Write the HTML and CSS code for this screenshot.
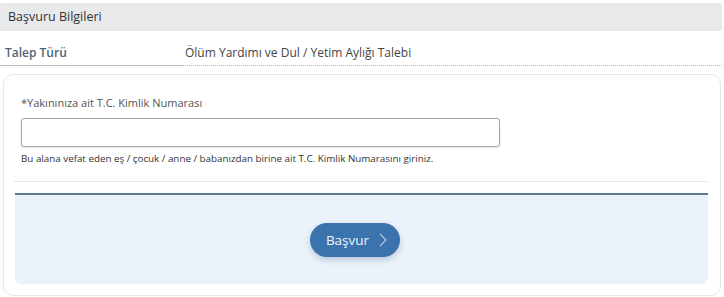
FILE: index.html
```html
<!DOCTYPE html>
<html lang="tr">
  <head>
    <meta charset="UTF-8" />
    <meta name="viewport" content="width=device-width, initial-scale=1.0" />
    <title>Başvuru Bilgileri</title>
    <link rel="stylesheet" href="styles.css">
  </head>
  <body>
    <div class="page">
      <div class="sectionTitle">Başvuru Bilgileri</div>

      <div class="infoRow">
        <div class="infoLabel">Talep Türü</div>
        <div class="infoValue">Ölüm Yardımı ve Dul / Yetim Aylığı Talebi</div>
      </div>

      <div class="card">
        <div class="formBody">
          <label class="fieldLabel" for="tckn">*Yakınınıza ait T.C. Kimlik Numarası</label>
          <input class="fieldInput" id="tckn" type="text" />
          <p class="fieldHelp">Bu alana vefat eden eş / çocuk / anne / babanızdan birine ait T.C. Kimlik Numarasını giriniz.</p>
        </div>
        <div class="formFooter">
          <button class="submitBtn">Başvur
            <svg class="chev" width="8" height="14" viewBox="0 0 8 14"><path d="M1 1 L7 7 L1 13" fill="none" stroke="#b9cfe6" stroke-width="1.1"/></svg>
          </button>
        </div>
      </div>
    </div>
  </body>
</html>
```

FILE: styles.css
```css
* {
  margin: 0;
  padding: 0;
  box-sizing: border-box;
}
body {
  width: 724px;
  height: 297px;
  background-color: #fff;
  font-family: "Open Sans", "Noto Sans", sans-serif;
  color: #444;
  overflow: hidden;
}
.page {
  padding-top: 3px;
}
.sectionTitle {
  height: 28px;
  margin-right: 2px;
  background-color: #e8e9eb;
  border-radius: 2px;
  padding-left: 8px;
  font-size: 12.5px;
  line-height: 28px;
  color: #333;
}
.infoRow {
  display: flex;
  margin-top: 12px;
  height: 23px;
  margin-right: 2px;
}
.infoLabel {
  width: 183px;
  padding-left: 5px;
  font-size: 12px;
  font-weight: 600;
  color: #4d6478;
  border-bottom: 1px solid #b9bec4;
  line-height: 20px;
}
.infoValue {
  flex: 1;
  padding-left: 2px;
  font-size: 12px;
  color: #444;
  border-bottom: 1px dotted #b5b5b5;
  line-height: 20px;
}
.card {
  margin: 8px 3px 0 3px;
  height: 222px;
  border: 1px solid #e6e6e6;
  border-radius: 10px;
  padding: 0 12px 10px 11px;
}
.formBody {
  padding: 21px 0 0 6px;
  height: 107px;
  border-bottom: 1px dotted #d0d0d0;
}
.fieldLabel {
  display: block;
  font-size: 11px;
  color: #555;
  line-height: 14px;
}
.fieldInput {
  display: block;
  margin-top: 8px;
  width: 479px;
  height: 29px;
  border: 1px solid #a6a6a6;
  border-radius: 3px;
  box-shadow: 0 1px 2px rgba(0, 0, 0, 0.12);
  outline: none;
}
.fieldHelp {
  margin-top: 6px;
  font-size: 9.8px;
  color: #333;
  line-height: 12px;
}
.formFooter {
  margin-top: 11px;
  height: 91px;
  border-top: 2px solid #5b7990;
  background-color: #ebf2fa;
  border-radius: 0 0 6px 6px;
  display: flex;
  justify-content: center;
  padding-top: 28px;
  padding-right: 14px;
}
.submitBtn {
  width: 90px;
  height: 34px;
  border: none;
  border-radius: 17px;
  background-color: #3b73ac;
  color: #f2f6fb;
  font-family: "Open Sans", "Noto Sans", sans-serif;
  font-size: 13.5px;
  display: flex;
  align-items: center;
  justify-content: center;
  gap: 10px;
  padding-left: 4px;
  box-shadow: 0 3px 6px rgba(40, 80, 130, 0.25);
  cursor: pointer;
}
.chev {
  display: block;
}
```
